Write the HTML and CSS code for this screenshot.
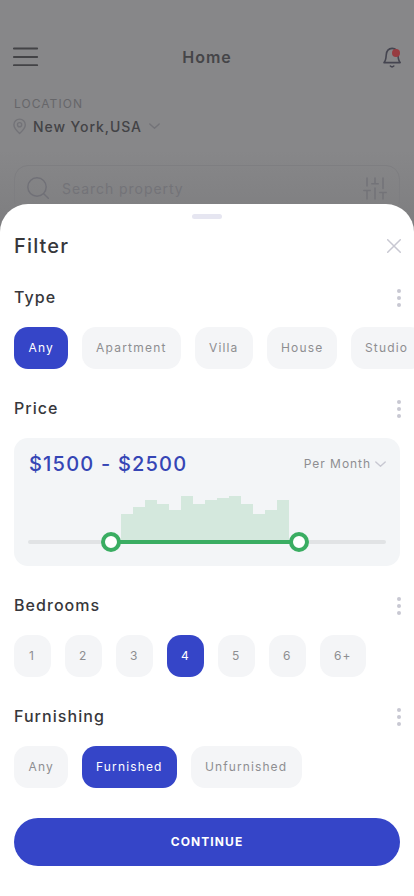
FILE: index.html
```html
<!DOCTYPE html>
<html lang="en">
<head>
<meta charset="utf-8">
<meta name="viewport" content="width=device-width, initial-scale=1">
<title>Filter</title>
<link rel="stylesheet" href="styles.css">
</head>
<body>
<div class="screen">
  <div class="home">
    <header class="topbar">
      <svg class="menu" width="26" height="20" viewBox="0 0 26 20"><path d="M.8 1.5H24.2M.8 10H24.2M.8 18.2H24.2"/></svg>
      <h1 class="home-title">Home</h1>
      <svg class="bell" width="20" height="22" viewBox="0 0 20 22"><path d="M2 15.6H18.2C16.6 13.8 16.2 11.5 16 8.2C15.8 4 13.8 1.4 10.1 1.4S4.5 4 4.2 8.2C4 11.5 3.6 13.8 2 15.6Z"/><path d="M8.4 19Q10 20.6 11.8 19"/><circle cx="14" cy="6" r="4"/></svg>
    </header>
    <div class="label">LOCATION</div>
    <div class="place">
      <svg class="pin" width="14" height="17" viewBox="0 0 14 17"><path d="M6.6 15.6C3.8 13 .9 10 .9 6.8A5.7 5.7 0 0 1 12.3 6.8C12.3 10 9.4 13 6.6 15.6Z"/><circle cx="6.6" cy="6.7" r="2.1"/></svg>
      <span class="city">New York,USA</span>
      <svg class="chevron" width="11" height="7" viewBox="0 0 11 7"><path d="M.8 1L5.5 5.3L10.2 1"/></svg>
    </div>
    <div class="search">
      <svg class="lens" width="23" height="23" viewBox="0 0 23 23"><circle cx="10" cy="10" r="9.2"/><path d="M16.7 16.7L21.3 21.3"/></svg>
      <span class="placeholder">Search property</span>
      <svg class="sliders" width="24" height="23" viewBox="0 0 24 23"><path d="M4 1V9M.8 13.4H7.2M4 13.8V22M12 1V6.8M8.8 6.8H15.2M12 11V22M20 1V11.5M16.8 15.4H23.2M20 15.8V22"/></svg>
    </div>
  </div>

  <main class="sheet">
    <div class="handle"></div>
    <div class="sheet-head">
      <h2 class="sheet-title">Filter</h2>
      <svg class="close" width="14" height="14" viewBox="0 0 14 14"><path d="M.7 .7L13.3 13.3M13.3 .7L.7 13.3"/></svg>
    </div>

    <section class="group">
      <div class="group-head"><h3 class="group-title type">Type</h3><div class="dots"><i></i><i></i><i></i></div></div>
      <div class="chips">
        <div class="chip any active">Any</div>
        <div class="chip apartment">Apartment</div>
        <div class="chip villa">Villa</div>
        <div class="chip house">House</div>
        <div class="chip studio">Studio</div>
      </div>
    </section>

    <section class="group">
      <div class="group-head"><h3 class="group-title">Price</h3><div class="dots"><i></i><i></i><i></i></div></div>
      <div class="price">
        <div class="price-head">
          <span class="range">$1500 - $2500</span>
          <span class="period">Per Month</span>
          <svg class="chevron" width="11" height="7" viewBox="0 0 11 7"><path d="M.8 1L5.5 5.3L10.2 1"/></svg>
        </div>
        <div class="chart">
          <div class="bars">
            <i style="height:28px"></i><i style="height:35px"></i><i style="height:42px"></i><i style="height:38px"></i><i style="height:32px"></i><i style="height:46px"></i><i style="height:38px"></i><i style="height:42px"></i><i style="height:44px"></i><i style="height:46px"></i><i style="height:38px"></i><i style="height:28px"></i><i style="height:32px"></i><i style="height:42px"></i>
          </div>
          <div class="track"><div class="fill"></div><div class="knob low"></div><div class="knob high"></div></div>
        </div>
      </div>
    </section>

    <section class="group">
      <div class="group-head"><h3 class="group-title">Bedrooms</h3><div class="dots"><i></i><i></i><i></i></div></div>
      <div class="chips">
        <div class="chip num one">1</div>
        <div class="chip num">2</div>
        <div class="chip num">3</div>
        <div class="chip num active">4</div>
        <div class="chip num">5</div>
        <div class="chip num">6</div>
        <div class="chip more">6+</div>
      </div>
    </section>

    <section class="group">
      <div class="group-head"><h3 class="group-title">Furnishing</h3><div class="dots"><i></i><i></i><i></i></div></div>
      <div class="chips">
        <div class="chip any">Any</div>
        <div class="chip furnished active">Furnished</div>
        <div class="chip unfurnished">Unfurnished</div>
      </div>
    </section>

    <button class="continue">CONTINUE</button>
  </main>
</div>
</body>
</html>
```
FILE: styles.css
```css
* { box-sizing: border-box; }
body { margin: 0; font-family: Inter, "Liberation Sans", sans-serif; background: #868688; }
h1, h2, h3 { margin: 0; font-weight: 500; }
svg { display: block; flex: none; fill: none; stroke-linecap: round; stroke-linejoin: round; }

.screen { width: 414px; height: 896px; overflow: hidden; display: flex; flex-direction: column; background: linear-gradient(#878789 0, #878789 150px, #7c7c7e 240px); }

.home { height: 204px; flex: none; padding: 46px 14px 0; overflow: hidden; }
.topbar { display: flex; align-items: center; justify-content: space-between; height: 22px; margin: 0 -2px 0 -1px; }
.menu { stroke: #434346; stroke-width: 1.8; }
.home-title { font-size: 16px; line-height: 22px; font-weight: 600; letter-spacing: 1px; margin-left: -1px; color: #454548; }
.bell { stroke: #454550; stroke-width: 1.6; margin: 1px 0 0 6px; }
.bell circle { fill: #973b40; stroke: none; }
.label { margin-top: 28px; font-size: 12px; line-height: 16px; letter-spacing: 1.05px; color: #666669; }
.place { display: flex; align-items: center; height: 20px; margin-top: 4px; }
.pin { stroke: #737378; stroke-width: 1.4; margin-left: -1px; }
.city { margin: 0 7px 0 6px; font-size: 14px; font-weight: 500; letter-spacing: .92px; color: #434346; }
.chevron { stroke: #737378; stroke-width: 1.4; }
.search { display: flex; align-items: center; height: 50px; margin-top: 29px; padding: 0 12px 3px; border: 1px solid #7e7e81; border-radius: 14px; }
.lens { stroke: #707077; stroke-width: 1.4; }
.placeholder { flex: 1; margin: -1px 0 0 12px; font-size: 14px; letter-spacing: .95px; color: #737378; }
.sliders { stroke: #737378; stroke-width: 1.5; }

.sheet { flex: 1; background: #fff; border-radius: 28px 28px 0 0; padding: 10px 14px 0; }
.handle { width: 30px; height: 5px; margin: 0 auto; border-radius: 3px; background: #e6e6f1; }
.sheet-head { display: flex; align-items: center; justify-content: space-between; height: 28px; margin: 13px -1px 26px 0; }
.sheet-title { font-size: 20px; line-height: 28px; letter-spacing: 1.15px; color: #37373b; }
.close { stroke: #c8c8d2; stroke-width: 1.5; }

.group { margin-bottom: 28px; }
.group-head { display: flex; align-items: center; justify-content: space-between; height: 22px; margin: 0 -1px 19px 0; }
.group-title { font-size: 16px; line-height: 22px; letter-spacing: 1.05px; color: #37373b; }
.dots { display: flex; flex-direction: column; gap: 3px; padding-top: 2px; }
.dots i { width: 4px; height: 4px; border-radius: 50%; background: #c8c8d2; }

.chips { display: flex; gap: 14px; }
.chip { flex: none; height: 42px; padding-left: 14px; border-radius: 14px; background: #f4f5f7; color: #8e8e91; font-size: 12px; line-height: 42px; letter-spacing: 1.15px; white-space: nowrap; }
.chip.active { background: #3545c8; color: #fff; }
.any { width: 54px; padding-left: 14.5px; }
.apartment { width: 99px; letter-spacing: 1.22px; }
.villa { width: 58px; }
.house { width: 70px; }
.studio { width: 73px; }
.num { width: 37px; }
.one { padding-left: 15px; }
.more { width: 46px; }
.furnished { width: 95px; }
.unfurnished { width: 111px; letter-spacing: 1.1px; }

.price { height: 128px; padding: 14px; border-radius: 14px; background: #f3f5f7; }
.price-head { display: flex; align-items: center; height: 24px; }
.range { flex: 1; padding-left: 1px; font-size: 20px; line-height: 24px; font-weight: 500; letter-spacing: 1.2px; color: #3545b5; }
.period { margin: -1px 4px 0 0; font-size: 12px; letter-spacing: .95px; color: #8e8e91; }
.price .chevron { stroke: #c8c8d2; }
.chart { display: flex; flex-direction: column; padding-top: 20px; }
.bars { display: flex; align-items: flex-end; height: 46px; margin-left: 93px; }
.bars i { width: 12px; background: #d4e8dd; }
.track { position: relative; height: 4px; margin-top: -2px; border-radius: 2px; background: #e1e3e5; }
.fill { width: 188px; height: 4px; margin-left: 83px; background: #3aad62; }
.knob { position: absolute; top: -8px; width: 20px; height: 20px; border: 4px solid #3aad62; border-radius: 50%; background: #fff; }
.low { left: 73px; }
.high { left: 261px; }

.continue { display: block; width: 386px; height: 48px; margin-top: 30px; padding: 0; border: 0; border-radius: 24px; background: #3545c8; color: #fff; font: 700 12px/48px Inter, "Liberation Sans", sans-serif; letter-spacing: 1.1px; }
```
